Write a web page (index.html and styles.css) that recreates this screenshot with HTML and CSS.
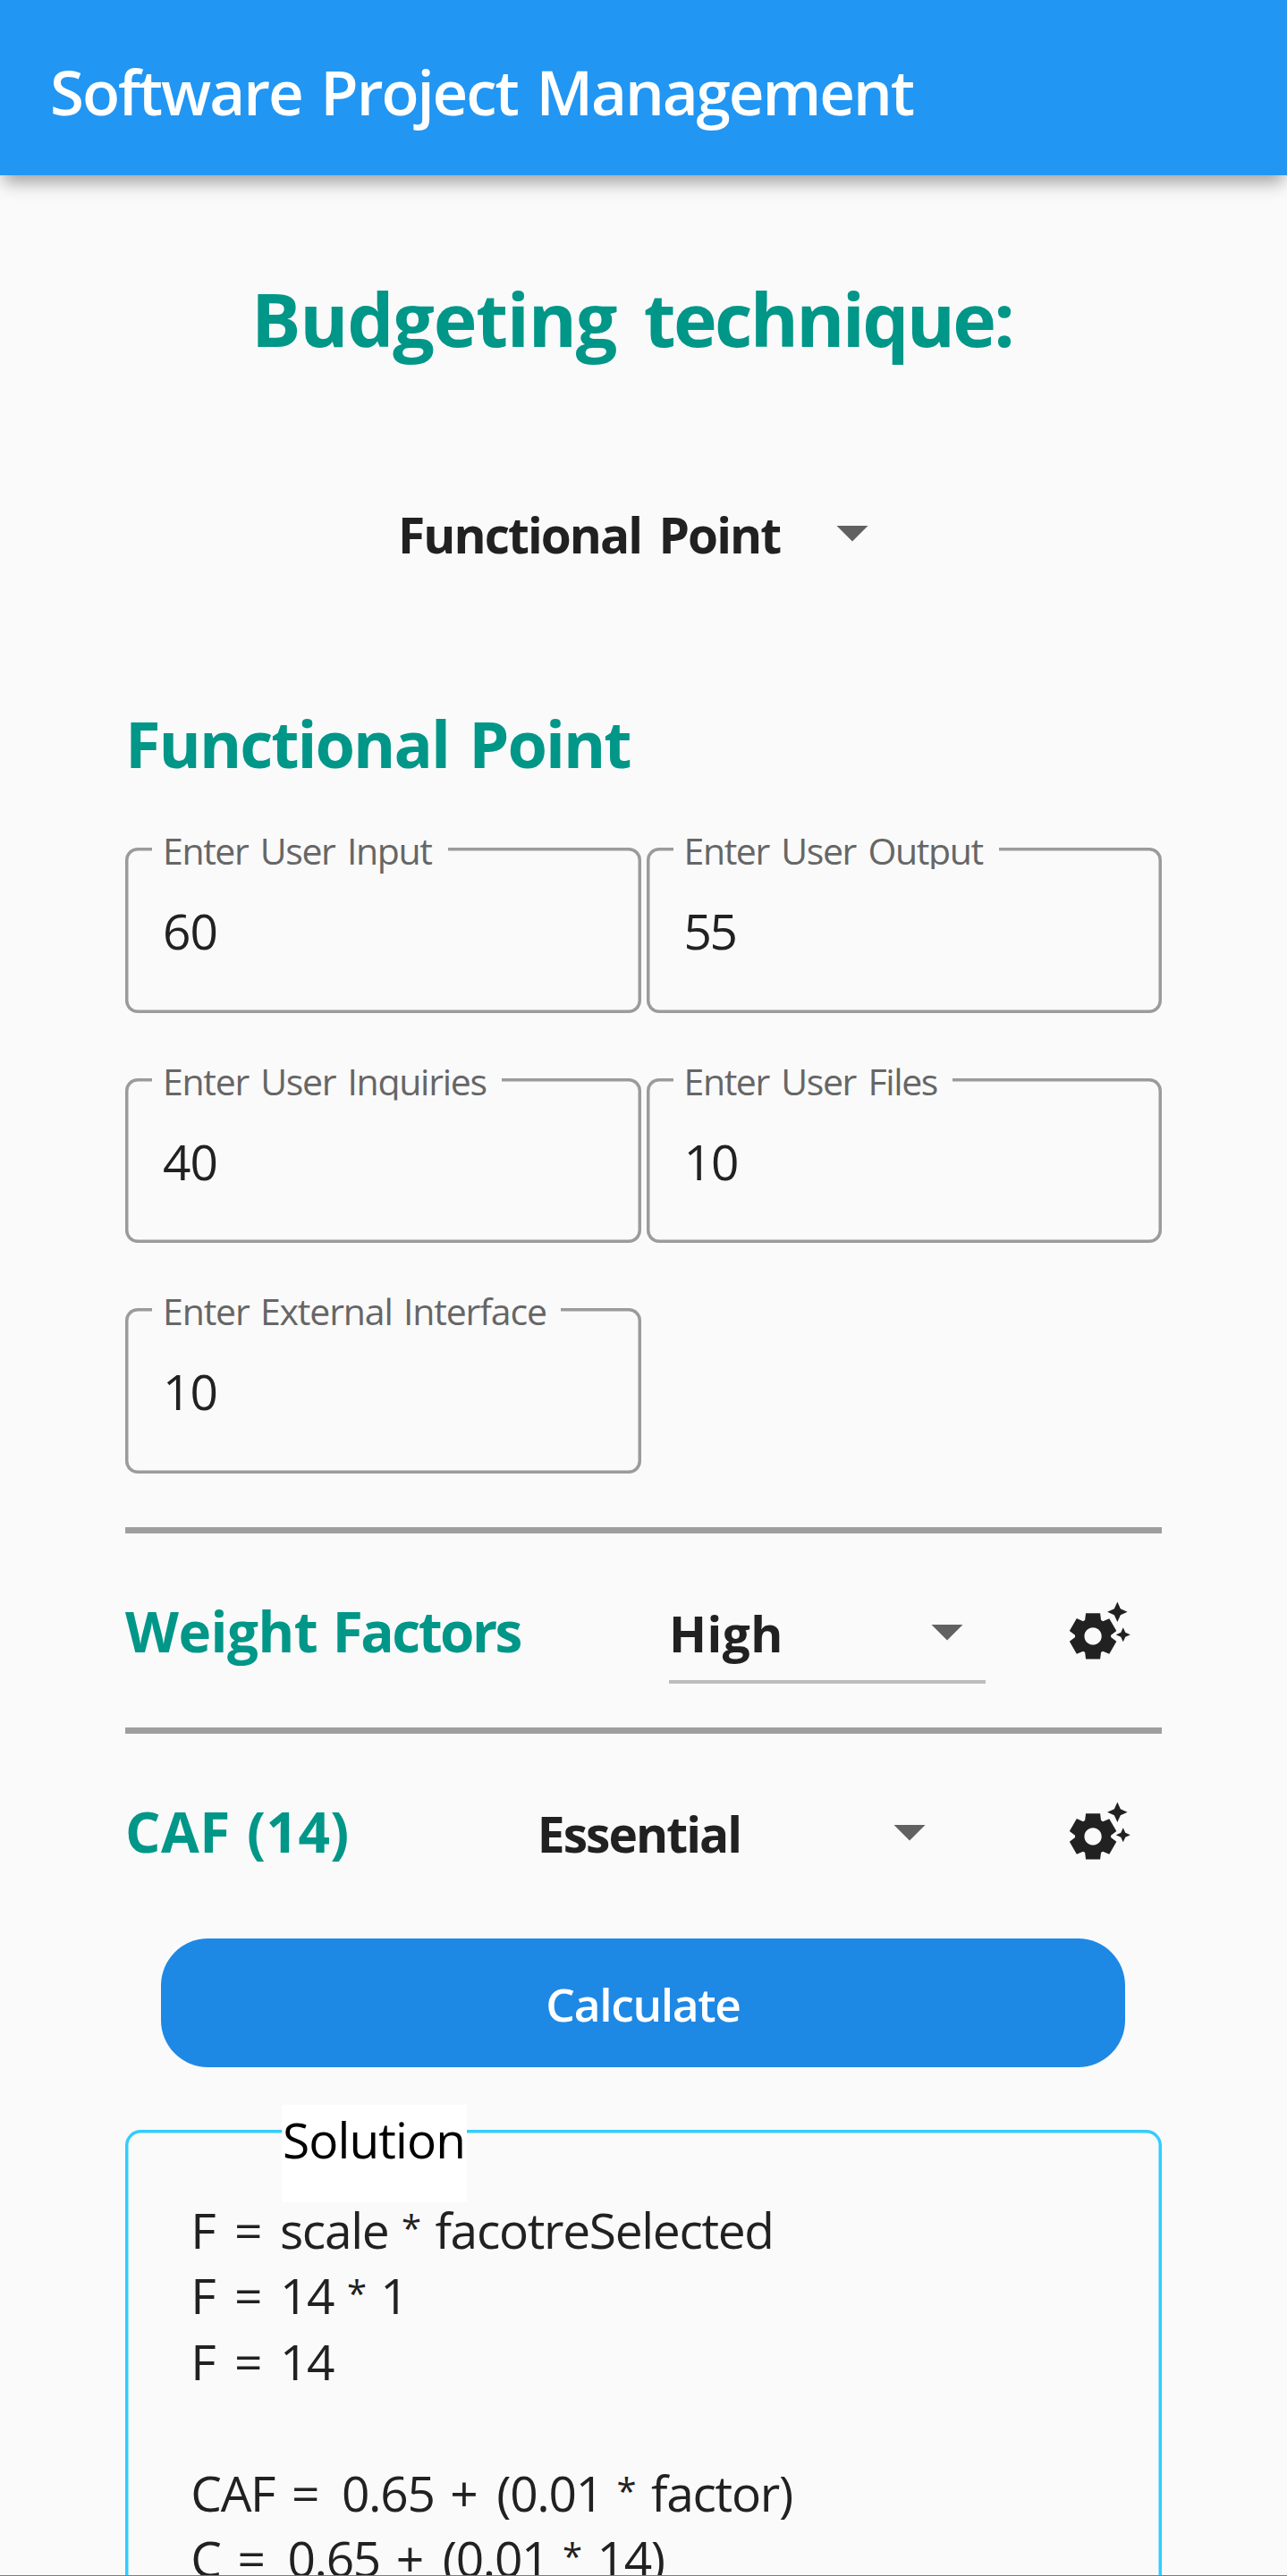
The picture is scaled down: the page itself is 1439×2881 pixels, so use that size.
FILE: index.html
```html
<!DOCTYPE html>
<html lang="en">
<head>
<meta charset="utf-8">
<title>Software Project Management</title>
<link rel="stylesheet" href="styles.css">
</head>
<body>
<svg width="0" height="0" class="defs" aria-hidden="true">
  <symbol id="arrow" viewBox="0 0 24 24"><path d="M7 10l5 5 5-5z"/></symbol>
  <symbol id="suggest" viewBox="0 0 24 24"><path d="M17.41 6.59 15 5.5l2.41-1.09L18.5 2l1.09 2.41L22 5.5l-2.41 1.09L18.5 9l-1.09-2.41zm3.87 6.13L20.5 11l-.78 1.72-1.72.78 1.72.78.78 1.72.78-1.72L23 13.5l-1.72-.78zm-5.04 1.65 1.94 1.47-2.5 4.33-2.24-.94c-.2.13-.42.26-.64.37l-.3 2.4h-5l-.3-2.41c-.22-.11-.43-.23-.64-.37l-2.24.94-2.5-4.33 1.94-1.47c-.01-.11-.01-.24-.01-.36s0-.25.01-.37l-1.94-1.47 2.5-4.33 2.24.94c.2-.13.42-.26.64-.37L7.5 6h5l.3 2.41c.22.11.43.23.64.37l2.24-.94 2.5 4.33-1.94 1.47c.01.12.01.24.01.37s0 .24-.01.36zM13 14c0-1.66-1.34-3-3-3s-3 1.34-3 3 1.34 3 3 3 3-1.34 3-3z"/></symbol>
</svg>
<div class="screen">
  <header class="appbar">Software Project Management</header>
  <main class="content">
    <h1 class="title">Budgeting <span class="tighter">technique:</span></h1>
    <div class="dropdown technique">
      <span class="choice">Functional Point</span>
      <svg class="arrow"><use href="#arrow"/></svg>
    </div>

    <h2 class="subtitle">Functional Point</h2>
    <div class="fields">
      <div class="field"><label class="label input">Enter User Input</label><span class="value">60</span></div>
      <div class="field"><label class="label output">Enter User Output</label><span class="value tight">55</span></div>
      <div class="field"><label class="label inquiries">Enter User Inquiries</label><span class="value">40</span></div>
      <div class="field"><label class="label files">Enter User Files</label><span class="value">10</span></div>
      <div class="field"><label class="label external">Enter External Interface</label><span class="value">10</span></div>
    </div>

    <div class="divider"></div>
    <section class="row">
      <h3 class="row-title weight">Weight <span class="tighter">Factors</span></h3>
      <div class="dropdown level">
        <span class="choice short">High</span>
        <svg class="arrow"><use href="#arrow"/></svg>
      </div>
      <svg class="gear"><use href="#suggest"/></svg>
    </section>
    <div class="divider"></div>
    <section class="row last">
      <h3 class="row-title">CAF (14)</h3>
      <div class="dropdown caf">
        <span class="choice">Essential</span>
        <svg class="arrow"><use href="#arrow"/></svg>
      </div>
      <svg class="gear"><use href="#suggest"/></svg>
    </section>

    <button class="calculate">Calculate</button>

    <section class="solution">
      <span class="solution-label">Solution</span>
      <p class="line">F <span class="eq">=</span> scale <span class="star">*</span> facotreSelected</p>
      <p class="line">F <span class="eq">=</span> 14 <span class="star">*</span> 1</p>
      <p class="line">F <span class="eq">=</span> 14</p>
      <p class="line">&nbsp;</p>
      <p class="line wide">CAF <span class="eq">=</span> 0.65 <span class="plus">+</span> (0.01 <span class="star">*</span> factor)</p>
      <p class="line wide">C <span class="eq">=</span> 0.65 <span class="plus">+</span> (0.01 <span class="star">*</span> 14)</p>
    </section>
  </main>
  <div class="bottom-edge"></div>
</div>
</body>
</html>
```
FILE: styles.css
```css
* { box-sizing: border-box; margin: 0; padding: 0; }

body {
  background: #fafafa;
  color: #212121;
  font-family: "Open Sans", "Noto Sans", sans-serif;
}

.defs { display: none; }

.screen {
  display: flex;
  flex-direction: column;
  height: 2881px;
  overflow: hidden;
}

.appbar {
  position: relative;
  flex: none;
  height: 196px;
  padding-left: 56px;
  background: #2196f3;
  box-shadow: 0 12px 18px -4px rgba(0, 0, 0, .36);
  color: #fff;
  font-size: 69px;
  font-weight: 600;
  line-height: 204px;
  letter-spacing: -2.06px;
  word-spacing: 4.79px;
  white-space: nowrap;
}

.content {
  flex: 1;
  min-height: 0;
  overflow: hidden;
  padding: 104px 140px 0;
}

.title {
  padding-left: 141px;
  color: #009688;
  font-size: 82.5px;
  line-height: 113px;
  height: 112px;
  letter-spacing: -1.2px;
  word-spacing: 10.3px;
  white-space: nowrap;
}
.title .tighter { letter-spacing: -2.7px; }

.dropdown {
  display: flex;
  justify-content: space-between;
  align-items: flex-start;
  height: 84px;
}
.technique { width: 549.7px; margin: 141px 0 0 305px; }

.choice {
  font-size: 55px;
  font-weight: 700;
  line-height: 89px;
  letter-spacing: -1.95px;
  word-spacing: 7px;
  white-space: nowrap;
}
.choice.short { letter-spacing: .42px; }

.arrow { width: 84px; height: 84px; fill: #616161; }

.subtitle {
  margin-top: 143.8px;
  color: #009688;
  font-size: 72px;
  line-height: 100px;
  letter-spacing: -1.98px;
  word-spacing: 5.5px;
}

.fields {
  display: grid;
  grid-template-columns: 1fr 1fr;
  gap: 73px 6px;
  margin-top: 67.2px;
}

.field {
  position: relative;
  height: 184.6px;
  padding: 54px 0 0 42px;
  border-radius: 14px;
  box-shadow: inset 0 0 0 3.5px #9b9b9b;
}

.label {
  position: absolute;
  left: 30px;
  top: -21px;
  padding-left: 12px;
  background: #fafafa;
  color: #666;
  font-size: 41px;
  line-height: 48px;
  letter-spacing: -1.4px;
  word-spacing: 4.3px;
  white-space: nowrap;
}
.input { width: 331px; }
.output { width: 364.5px; clip-path: inset(0 0 3px); }
.inquiries { width: 391px; letter-spacing: -1.29px; word-spacing: 3.9px; clip-path: inset(0 0 2px); }
.files { width: 312.5px; }
.external { width: 457px; letter-spacing: -1.15px; word-spacing: 2.84px; }

.value {
  display: block;
  font-size: 55px;
  line-height: 77px;
  letter-spacing: -1px;
}
.value.tight { letter-spacing: -2.4px; }

.divider { height: 7px; background: #9e9e9e; }
.fields + .divider { margin-top: 60.5px; }

.row {
  display: flex;
  align-items: flex-start;
  height: 217.2px;
  padding: 66.5px 31.8px 0 0;
}
.row.last { height: 228.5px; }

.row-title {
  flex: 1;
  color: #009688;
  font-size: 62px;
  line-height: 85px;
  letter-spacing: .5px;
  word-spacing: 1.5px;
  white-space: nowrap;
}
.weight { letter-spacing: -.5px; word-spacing: 1px; }
.weight .tighter { letter-spacing: -2.5px; }

.level {
  width: 354px;
  height: 101px;
  padding-right: 1.5px;
  margin-right: 88.2px;
  border-bottom: 4px solid #bdbdbd;
}
.caf { width: 458.2px; margin-right: 131.2px; }

.gear { width: 77px; height: 77px; margin-top: 3.5px; fill: #212121; }

.calculate {
  display: block;
  width: 1078px;
  height: 143.7px;
  margin-left: 40px;
  border: 0;
  border-radius: 52.5px;
  background: #1e88e5;
  color: #fff;
  font: 600 51.5px/146px "Open Sans", "Noto Sans", sans-serif;
  letter-spacing: -1.35px;
}

.solution {
  position: relative;
  height: 900px;
  margin-top: 70.3px;
  padding: 75px 0 0 73.3px;
  border-radius: 17.5px;
  box-shadow: inset 0 0 0 3.5px #33ccff;
}

.solution-label {
  position: absolute;
  left: 174.5px;
  top: -28px;
  width: 207.8px;
  height: 108.7px;
  padding-left: 1.5px;
  background: #fff;
  color: #000;
  font-size: 55px;
  line-height: 78px;
  letter-spacing: -.89px;
}

.line {
  height: 73.5px;
  font-size: 55px;
  line-height: 74px;
  letter-spacing: -1.3px;
  word-spacing: 3.7px;
  white-space: nowrap;
}
.line.wide { word-spacing: 4.8px; }

.eq { margin: 0 4px 0 5px; }
.wide .eq { margin: 0 8px 0 1px; }
.plus { margin-right: 4px; }
.star {
  margin-left: -2px;
  font-size: 40px;
  line-height: 0;
  vertical-align: 8px;
}

.bottom-edge { flex: none; height: 1px; background: #2196f3; }
```
